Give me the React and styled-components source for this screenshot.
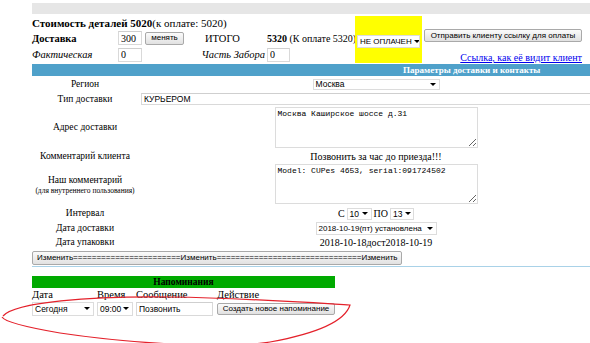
import React from "react";
import styled, { createGlobalStyle } from "styled-components";

const Global = createGlobalStyle`
  html, body { margin: 0; padding: 0; background: #fff; overflow: hidden; }
  body { font-family: "Liberation Serif", "Times New Roman", serif; font-size: 10px; color: #000; }
`;

const SANS = '"Liberation Sans", Arial, sans-serif';

const Page = styled.div`
  position: relative;
  width: 590px;
  height: 343px;
  padding: 3px 0 0 32px;
  box-sizing: border-box;
  overflow: hidden;
`;

const TopBar = styled.div`
  height: 11px;
  background: #e6e6e6;
`;

const Summary = styled.div`
  margin-top: 2px;
  display: grid;
  grid-template-columns: 86px 87px 62px 88px 67px 1fr;
  grid-template-rows: 14px 16px 17px;
  align-items: center;
  white-space: nowrap;
  font-size: 10.5px;
`;

const Cell = styled.div`
  grid-column: ${(p) => p.$col || "auto"};
  grid-row: ${(p) => p.$row || "auto"};
  display: flex;
  align-items: center;
  gap: 3px;
  font-size: ${(p) => (p.$fs ? p.$fs + "px" : "inherit")};
  font-weight: ${(p) => (p.$bold ? "bold" : "normal")};
  font-style: ${(p) => (p.$italic ? "italic" : "normal")};
  justify-content: ${(p) => p.$justify || "flex-start"};
  align-self: ${(p) => p.$align || "center"};
  padding-right: ${(p) => p.$pr || 0}px;
`;

const Lead = styled.span`
  font-size: 11px;
`;

const YellowCell = styled.div`
  grid-column: 5;
  grid-row: 1 / 4;
  align-self: stretch;
  background: #ffff00;
  display: flex;
  align-items: center;
  padding: 3px 0 0 2px;
`;

const TextInput = styled.input`
  box-sizing: border-box;
  width: ${(p) => p.$w}px;
  height: ${(p) => p.$h || 14}px;
  margin: ${(p) => p.$m || 0};
  padding: 0 2px;
  border: 1px solid #d9d9d9;
  border-top-color: #cfcfcf;
  background: #fff;
  font-family: ${(p) => (p.$sans ? SANS : '"Liberation Serif", "Times New Roman", serif')};
  font-size: ${(p) => (p.$sans ? 8.5 : 10)}px;
  color: #000;
  outline: none;
`;

const Button = styled.button`
  box-sizing: border-box;
  height: ${(p) => p.$h || 13}px;
  width: ${(p) => (p.$w ? p.$w + "px" : "auto")};
  padding: 0 3px;
  margin: 0;
  border: 1px solid #a9a9a9;
  border-radius: 2px;
  background: linear-gradient(#fbfbfb, #e1e1e1);
  font-family: ${SANS};
  font-size: 8px;
  color: #000;
  line-height: 1;
  white-space: nowrap;
  overflow: hidden;
  text-align: ${(p) => p.$align || "center"};
`;

const SelectBox = styled.div`
  box-sizing: border-box;
  display: flex;
  align-items: center;
  justify-content: space-between;
  width: ${(p) => p.$w}px;
  height: ${(p) => p.$h || 13}px;
  padding: 0 3px 0 2px;
  border: 1px solid #dcdcdc;
  background: #fff;
  font-family: ${SANS};
  font-size: ${(p) => p.$fs || 8.5}px;
  white-space: nowrap;
  overflow: hidden;
  &::after {
    content: "";
    flex: none;
    border-left: 3px solid transparent;
    border-right: 3px solid transparent;
    border-top: 3px solid #000;
    margin-left: 2px;
  }
`;

const Link = styled.a`
  color: #0000ee;
  text-decoration: underline;
  font-size: 10px;
`;

const SectionBar = styled.div`
  height: 12px;
  margin-top: ${(p) => p.$mt || 0}px;
  width: ${(p) => (p.$w ? p.$w + "px" : "auto")};
  background: ${(p) => p.$bg};
  color: ${(p) => p.$fg};
  font-weight: bold;
  font-size: ${(p) => p.$fs}px;
  line-height: 12px;
  padding-left: ${(p) => p.$pl || 0}px;
  text-align: ${(p) => p.$align || "left"};
  white-space: nowrap;
`;

const Form = styled.div`
  display: grid;
  grid-template-columns: 106px 476px;
  white-space: nowrap;
`;

const Label = styled.div`
  height: ${(p) => p.$h}px;
  display: flex;
  flex-direction: column;
  align-items: center;
  justify-content: center;
  text-align: center;
  line-height: 11px;
  font-size: 9.5px;
`;

const Small = styled.span`
  font-size: 7.5px;
  line-height: 10px;
`;

const Value = styled.div`
  height: ${(p) => p.$h}px;
  display: flex;
  align-items: ${(p) => p.$alignItems || "center"};
  justify-content: ${(p) => p.$justify || "center"};
  gap: 2px;
`;

const Area = styled.textarea`
  box-sizing: border-box;
  width: 203px;
  height: ${(p) => p.$h}px;
  margin: 0;
  padding: 1px 2px;
  border: 1px solid #dcdcdc;
  font-family: "Liberation Mono", "Courier New", monospace;
  font-size: 8px;
  line-height: 10px;
  resize: both;
  outline: none;
`;

const ButtonRow = styled.div`
  margin-top: 2px;
  height: 15px;
  border-bottom: 1px solid #a9d2e8;
  margin-right: -40px;
`;

const ReminderGrid = styled.div`
  display: grid;
  width: 303px;
  grid-template-columns: 65px 39px 81px 118px;
  grid-template-rows: 13px 15px;
  align-items: center;
  white-space: nowrap;
  font-size: 10.5px;
`;

const Overlay = styled.svg`
  position: absolute;
  left: 0;
  top: 0;
  pointer-events: none;
`;

export default function App() {
  return (
    <>
      <Global />
      <Page>
        <TopBar />
        <Summary>
          <Cell $col="1 / 5" $row="1">
            <Lead>
              <b>Стоимость деталей 5020</b>(к оплате: 5020)
            </Lead>
          </Cell>
          <Cell $col="1" $row="2" $bold>Доставка</Cell>
          <Cell $col="2" $row="2">
            <TextInput readOnly value="300" $w={24} />
            <Button $w={39}>менять</Button>
          </Cell>
          <Cell $col="3" $row="2">ИТОГО</Cell>
          <Cell $col="4" $row="2" $fs={10}>
            <span>
              <b>5320</b> (К оплате 5320)
            </span>
          </Cell>
          <YellowCell>
            <SelectBox $w={63} $fs={8}>НЕ ОПЛАЧЕН</SelectBox>
          </YellowCell>
          <Cell $col="6" $row="2" $align="start">
            <Button $w={158} $h={13} style={{ marginLeft: 2, marginTop: -1 }}>
              Отправить клиенту ссылку для оплаты
            </Button>
          </Cell>
          <Cell $col="1" $row="3" $italic>Фактическая</Cell>
          <Cell $col="2" $row="3">
            <TextInput readOnly value="0" $w={24} />
          </Cell>
          <Cell $col="3" $row="3" $italic $justify="flex-end" $pr={2}>Часть Забора</Cell>
          <Cell $col="4" $row="3">
            <TextInput readOnly value="0" $w={23} />
          </Cell>
          <Cell $col="6" $row="3" $justify="flex-end" $pr={8} $align="end">
            <Link href="#">Ссылка, как её видит клиент</Link>
          </Cell>
        </Summary>

        <SectionBar $bg="#4fa1ca" $fg="#fff" $pl={371} $mt={1} $fs={9}>
          Параметры доставки и контакты
        </SectionBar>

        <Form>
          <Label $h={16}>Регион</Label>
          <Value $h={16}>
            <SelectBox $w={127} $h={11}>Москва</SelectBox>
          </Value>

          <Label $h={14}>Тип доставки</Label>
          <Value $h={14} $justify="flex-start">
            <TextInput readOnly value="КУРЬЕРОМ" $w={520} $h={12} $sans $m="0 0 0 3px" />
          </Value>

          <Label $h={43}>Адрес доставки</Label>
          <Value $h={43}>
            <Area readOnly $h={41} value="Москва Каширское шоссе д.31" />
          </Value>

          <Label $h={15}>Комментарий клиента</Label>
          <Value $h={15}>Позвонить за час до приезда!!!</Value>

          <Label $h={42}>
            <span>Наш комментарий</span>
            <Small>(для внутреннего пользования)</Small>
          </Label>
          <Value $h={42} $alignItems="flex-start">
            <Area readOnly $h={40} value="Model: CUPes 4653, serial:091724502" />
          </Value>

          <Label $h={15}>Интервал</Label>
          <Value $h={15}>
            С<SelectBox $w={25} $h={12}>10</SelectBox>ПО<SelectBox $w={24} $h={12}>13</SelectBox>
          </Value>

          <Label $h={14}>Дата доставки</Label>
          <Value $h={14}>
            <SelectBox $w={121} $h={13} $fs={8}>2018-10-19(пт) установлена</SelectBox>
          </Value>

          <Label $h={14}>Дата упаковки</Label>
          <Value $h={14}>2018-10-18дост2018-10-19</Value>
        </Form>

        <ButtonRow>
          <Button $w={370} $h={14} $align="left" style={{ paddingLeft: 4 }}>
            Изменить=======================Изменить===============================Изменить
          </Button>
        </ButtonRow>

        <SectionBar $bg="#00aa00" $fg="#000" $w={303} $mt={9} $align="center" $fs={9.5}>
          Напоминания
        </SectionBar>

        <ReminderGrid>
          <span>Дата</span>
          <span>Время</span>
          <span>Сообщение</span>
          <span>Действие</span>
          <SelectBox $w={62} $h={14}>Сегодня</SelectBox>
          <SelectBox $w={36} $h={14}>09:00</SelectBox>
          <TextInput readOnly value="Позвонить" $w={77} $h={14} $sans />
          <Button $w={118} $h={12}>Создать новое напоминание</Button>
        </ReminderGrid>

        <Overlay width="590" height="343" viewBox="0 0 590 343">
          <path
            d="M 3 316 C 15 302, 90 296, 170 297 C 240 298, 300 302, 350 305 C 346 318, 325 332, 270 342 C 220 350, 120 342, 60 333 C 25 327, 5 322, 2 317"
            fill="none"
            stroke="#e4212b"
            strokeWidth="1.2"
          />
        </Overlay>
      </Page>
    </>
  );
}
